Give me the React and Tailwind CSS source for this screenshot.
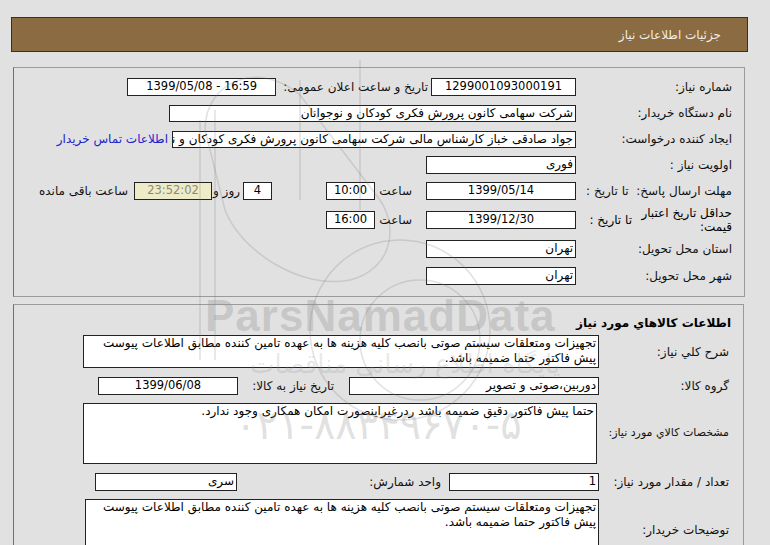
import React from "react";

const font = { fontFamily: '"DejaVu Sans", Tahoma, sans-serif' };

function Box({ className = "", children, ltr = false, align = "right", wrap = false }) {
  return (
    <div
      className={`bg-white border border-[#222] overflow-hidden leading-[15px] px-[2px] ${
        wrap ? "whitespace-normal" : "whitespace-nowrap"
      } ${align === "center" ? "text-center" : "text-right"} ${className}`}
      dir={ltr ? "ltr" : "rtl"}
    >
      {children}
    </div>
  );
}

function Label({ className = "", children }) {
  return <div className={`shrink-0 whitespace-nowrap text-[#111] ${className}`}>{children}</div>;
}

export default function App() {
  return (
    <div
      dir="rtl"
      style={font}
      className="relative w-[770px] h-[545px] overflow-hidden bg-[#e1e1e1] text-[12px] text-black"
    >
      {/* header */}
      <div className="pt-[17px] pr-[22px] pl-[11px]">
        <div className="h-[35px] bg-[#8b6b42] border border-[#3b2f20] flex items-center pr-[26px] text-[12px] text-[#f4ece0]">
          جزئیات اطلاعات نیاز
        </div>
      </div>

      {/* panel 1 */}
      <div className="mt-[15px] mr-[25px] ml-[13px] h-[230px] border border-[#9a9a9a] border-l-[#6f6f6f] pt-[6px]">
        <div className="flex items-center h-[26px]">
          <Label className="w-[168px] pr-[12px]">شماره نیاز:</Label>
          <Box className="w-[145px] h-[18px] text-[11.5px]" ltr align="center">1299001093000191</Box>
          <Label className="mr-[3px]">تاریخ و ساعت اعلان عمومی:</Label>
          <Box className="w-[149px] h-[18px] mr-[7px] text-[11.5px]" ltr align="center">1399/05/08 - 16:59</Box>
        </div>
        <div className="flex items-center h-[26px]">
          <Label className="w-[168px] pr-[12px]">نام دستگاه خریدار:</Label>
          <Box className="w-[407px] h-[17px]">شرکت سهامی کانون پرورش فکری کودکان و نوجوانان</Box>
        </div>
        <div className="flex items-center h-[26px]">
          <Label className="w-[168px] pr-[12px]">ایجاد کننده درخواست:</Label>
          <Box className="w-[404px] h-[17px]">جواد  صادقی خباز کارشناس مالی شرکت سهامی کانون پرورش فکری کودکان و نوجوانان</Box>
          <a className="mr-[4px] text-[#2222cc] whitespace-nowrap">اطلاعات تماس خریدار</a>
        </div>
        <div className="flex items-center h-[26px]">
          <Label className="w-[168px] pr-[12px]">اولویت نیاز :</Label>
          <Box className="w-[150px] h-[18px]">فوری</Box>
        </div>
        <div className="flex items-center h-[26px]">
          <Label className="w-[168px] pr-[12px]">مهلت ارسال پاسخ:&nbsp; تا تاریخ :</Label>
          <Box className="w-[150px] h-[18px] text-[11.5px]" ltr align="center">1399/05/14</Box>
          <Label className="w-[51px] pr-[14px]">ساعت</Label>
          <Box className="w-[49px] h-[18px] text-[11.5px]" ltr align="center">10:00</Box>
          <div className="w-[54px] shrink-0" />
          <Box className="w-[29px] h-[18px] text-[11.5px]" ltr align="center">4</Box>
          <Label className="w-[31px] pr-[3px]">روز و</Label>
          <Box className="w-[78px] h-[18px] !bg-[#eeecc8] text-[#8a8a7a] text-[11.5px]" ltr align="center">23:52:02</Box>
          <Label className="pr-[6px]">ساعت باقی مانده</Label>
        </div>
        <div className="flex items-center h-[31px]">
          <div className="w-[168px] pr-[12px] flex items-center shrink-0">
            <div className="w-[100px] leading-[14px]">حداقل تاریخ اعتبار قیمت:</div>
            <div className="whitespace-nowrap">تا تاریخ :</div>
          </div>
          <Box className="w-[150px] h-[18px] text-[11.5px]" ltr align="center">1399/12/30</Box>
          <Label className="w-[51px] pr-[14px]">ساعت</Label>
          <Box className="w-[49px] h-[18px] text-[11.5px]" ltr align="center">16:00</Box>
        </div>
        <div className="flex items-center h-[27px]">
          <Label className="w-[168px] pr-[12px]">استان محل تحویل:</Label>
          <Box className="w-[150px] h-[18px]">تهران</Box>
        </div>
        <div className="flex items-center h-[28px]">
          <Label className="w-[168px] pr-[12px]">شهر محل تحویل:</Label>
          <Box className="w-[150px] h-[18px]">تهران</Box>
        </div>
      </div>

      {/* panel 2 */}
      <div className="mt-[7px] mr-[26px] ml-[13px] h-[260px] border border-[#9a9a9a] border-l-[#6f6f6f] pt-[9px]">
        <div className="pr-[12px] text-[12px] font-bold h-[18px]">اطلاعات کالاهاي مورد نیاز</div>
        <div className="flex items-center mt-[3px] h-[33px]">
          <Label className="w-[144px] pr-[14px]">شرح کلي نیاز:</Label>
          <Box className="w-[516px] h-[33px]" wrap>
            تجهیزات ومتعلقات سیستم صوتی بانصب کلیه هزینه ها به عهده تامین کننده مطابق اطلاعات پیوست پیش فاکتور حتما ضمیمه باشد.
          </Box>
        </div>
        <div className="flex items-center mt-[9px] h-[17px]">
          <Label className="w-[144px] pr-[14px]">گروه کالا:</Label>
          <Box className="w-[250px] h-[18px]">دوربین،صوتی و تصویر</Box>
          <Label className="w-[111px] pr-[15px]">تاریخ نیاز به کالا:</Label>
          <Box className="w-[140px] h-[18px] text-[11.5px]" ltr align="center">1399/06/08</Box>
        </div>
        <div className="flex items-center mt-[9px] h-[61px]">
          <Label className="w-[146px] pr-[14px] text-[11px]">مشخصات کالاي مورد نیاز:</Label>
          <Box className="w-[514px] h-[61px] self-stretch" wrap>
            حتما پیش فاکتور دقیق ضمیمه باشد ردرغیراینصورت امکان همکاری وجود ندارد.
          </Box>
        </div>
        <div className="flex items-center mt-[9px] h-[18px]">
          <Label className="w-[144px] pr-[14px]">تعداد / مقدار مورد نیاز:</Label>
          <Box className="w-[150px] h-[18px] text-[11.5px]">1</Box>
          <Label className="w-[212px] pr-[8px]">واحد شمارش:</Label>
          <Box className="w-[142px] h-[18px]">سری</Box>
        </div>
        <div className="flex items-center mt-[8px] h-[62px]">
          <Label className="w-[144px] pr-[14px]">توضیحات خریدار:</Label>
          <Box className="w-[514px] h-[62px] self-stretch" wrap>
            تجهیزات ومتعلقات سیستم صوتی بانصب کلیه هزینه ها به عهده تامین کننده مطابق اطلاعات پیوست پیش فاکتور حتما ضمیمه باشد.
          </Box>
        </div>
      </div>

      {/* watermark */}
      <div className="pointer-events-none absolute inset-0">
        <svg className="absolute left-0 top-0" width="770" height="545" viewBox="0 0 770 545" fill="none" stroke="rgba(120,120,120,0.22)" strokeWidth="1.5">
          <path d="M205 130 C205 80 260 60 300 95 L380 200 C400 230 390 270 350 280 C300 290 240 250 225 210 Z" />
          <path d="M200 120 L200 360" />
          <path d="M215 110 L215 360" />
          <path d="M300 80 L300 200" />
          <path d="M360 60 L360 210" />
          <circle cx="400" cy="330" r="90" />
          <circle cx="420" cy="340" r="60" />
        </svg>
        <div
          dir="ltr"
          className="absolute left-[205px] top-[283px] text-[44px] font-bold tracking-[1px] text-[rgba(150,150,150,0.35)]"
          style={{ fontFamily: '"Liberation Sans", Arial, sans-serif' }}
        >
          ParsNamadData
        </div>
        <div className="absolute left-[235px] top-[395px] text-[40px] text-[rgba(150,150,150,0.3)] whitespace-nowrap" dir="ltr">
          ۰۲۱-۸۸۳۴۹۶۷۰-۵
        </div>
        <div className="absolute left-[250px] top-[345px] text-[26px] text-[rgba(150,150,150,0.22)] whitespace-nowrap">
          پایگاه اطلاع رسانی مناقصات
        </div>
      </div>
    </div>
  );
}
